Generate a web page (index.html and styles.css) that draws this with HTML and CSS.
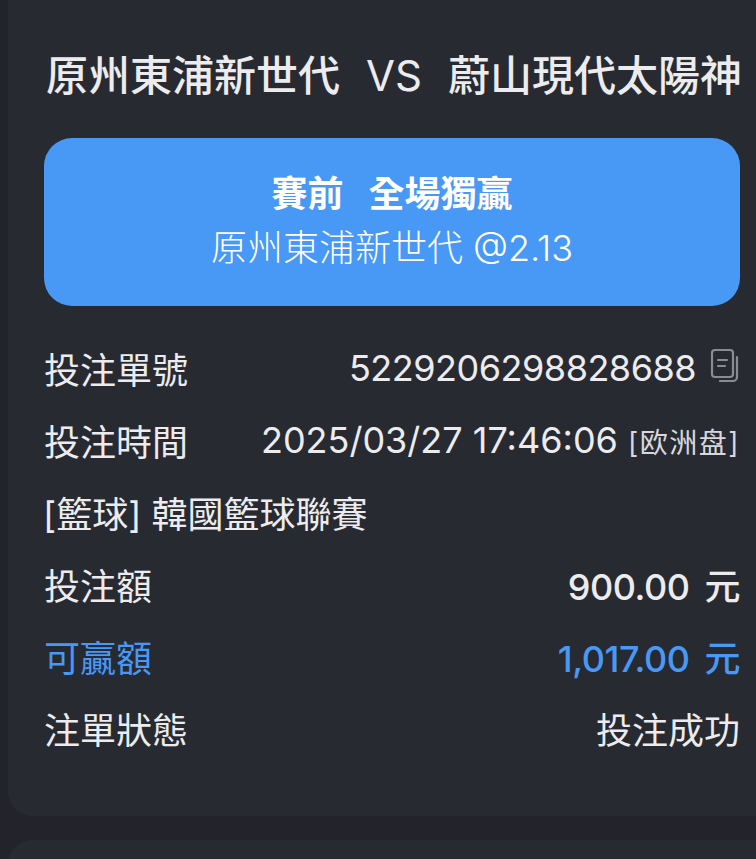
FILE: index.html
```html
<!DOCTYPE html>
<html lang="zh-Hant">

<head>
    <meta charset="UTF-8">
    <meta name="viewport" content="width=device-width, initial-scale=1.0">
    <title>注單詳情</title>
    <link rel="stylesheet" href="styles.css">
</head>

<body>
    <div class="card">
        <h1 class="match">原州東浦新世代<span class="vs">VS</span>蔚山現代太陽神</h1>
        <div class="pick">
            <div class="pick-title"><span>賽前</span><span>全場獨贏</span></div>
            <div class="pick-odds">原州東浦新世代 @2.13</div>
        </div>
        <div class="rows">
            <div class="row">
                <span>投注單號</span>
                <span class="order">5229206298828688
                    <svg class="copy" width="30" height="34" viewBox="0 0 30 34" fill="none" stroke="#8b8c93" stroke-width="2.2" stroke-linecap="round" stroke-linejoin="round">
                        <rect x="2" y="2" width="21" height="27" rx="3"></rect>
                        <path d="M8 12h9M8 18h7"></path>
                        <path d="M27 9v20a4 4 0 0 1-4 4H10"></path>
                    </svg>
                </span>
            </div>
            <div class="row">
                <span>投注時間</span>
                <span>2025/03/27 17:46:06 <small class="market">[欧洲盘]</small></span>
            </div>
            <div class="row league">[籃球] 韓國籃球聯賽</div>
            <div class="row">
                <span>投注額</span>
                <span class="amount">900.00 元</span>
            </div>
            <div class="row win">
                <span>可贏額</span>
                <span class="amount">1,017.00 元</span>
            </div>
            <div class="row">
                <span>注單狀態</span>
                <span>投注成功</span>
            </div>
        </div>
    </div>
    <div class="card next"></div>
</body>

</html>
```

FILE: styles.css
```css
html,
body {
    height: 100%;
}

body {
    margin: 0;
    height: 859px;
    overflow: hidden;
    padding-left: 8px;
    background-color: #22232b;
    color: #ececee;
    font-family: Inter, "Noto Sans CJK TC", sans-serif;
}

.card {
    background-color: #282a31;
    border-radius: 0 0 0 24px;
    height: 816px;
    padding: 48px 16px 0 36px;
    box-sizing: border-box;
}

.next {
    margin-top: 24px;
    height: 60px;
    padding: 0;
    border-radius: 24px 0 0 0;
}

.match {
    margin: 0 0 35px 2px;
    font-size: 42px;
    line-height: 55px;
    font-weight: 500;
    white-space: nowrap;
}

.vs {
    margin: 0 26px;
    font-size: 42px;
    font-weight: 400;
}

.pick {
    height: 168px;
    border-radius: 28px;
    background-color: #4898f5;
    color: #fff;
    text-align: center;
    display: flex;
    flex-direction: column;
    justify-content: center;
    gap: 6px;
}

.pick-title {
    display: flex;
    justify-content: center;
    gap: 25px;
    margin-top: -2px;
    font-size: 36px;
    line-height: 48px;
    font-weight: 700;
}

.pick-odds {
    font-size: 36px;
    line-height: 48px;
    font-weight: 300;
}

.rows {
    margin-top: 26px;
}

.row {
    display: flex;
    justify-content: space-between;
    align-items: center;
    height: 72px;
    font-size: 36px;
    font-weight: 400;
    white-space: nowrap;
}

.league {
    justify-content: flex-start;
    margin-left: -1px;
}

.order {
    display: flex;
    align-items: center;
    gap: 14px;
    letter-spacing: -0.5px;
}

.copy {
    flex: none;
    margin-top: -6px;
}

.market {
    font-size: 28px;
    letter-spacing: 1.5px;
    color: #d8d8dc;
}

.amount {
    font-weight: 500;
    letter-spacing: -0.5px;
    word-spacing: 6px;
}

.win {
    color: #4898f5;
}
```
